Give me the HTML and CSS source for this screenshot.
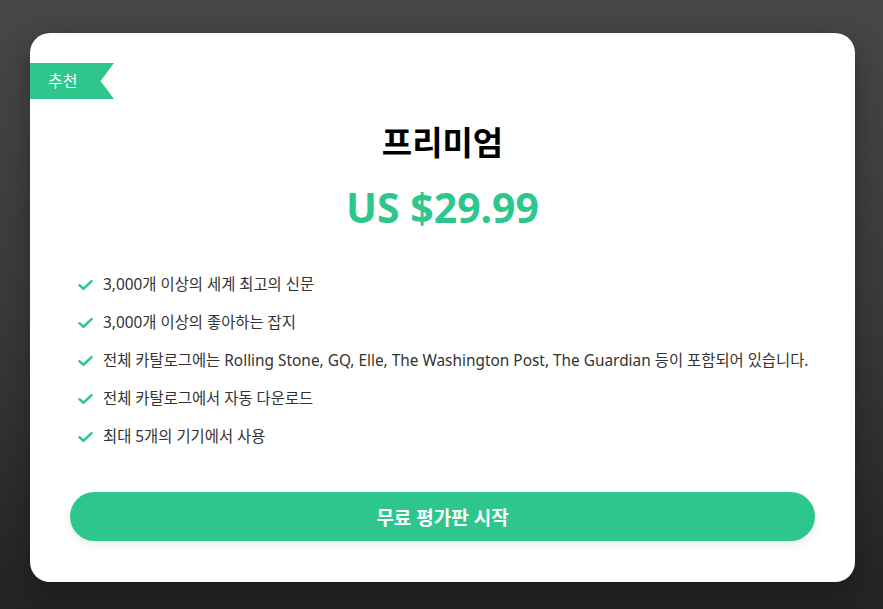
FILE: index.html
```html
<!DOCTYPE html>
<html lang="ko">
<head>
    <meta charset="UTF-8">
    <meta name="viewport" content="width=device-width, initial-scale=1.0">
    <title>프리미엄</title>
    <link rel="stylesheet" href="styles.css">
</head>
<body>
    <div class="plan-card">
        <div class="ribbon">추천</div>

        <h1 class="plan-title">프리미엄</h1>
        <p class="plan-price">US $29.99</p>

        <ul class="feature-list">
            <li>
                <svg class="check" viewBox="0 0 16 12"><path d="M1.5 6.2 L5.8 10 L14.5 1.8"/></svg>
                3,000개 이상의 세계 최고의 신문
            </li>
            <li>
                <svg class="check" viewBox="0 0 16 12"><path d="M1.5 6.2 L5.8 10 L14.5 1.8"/></svg>
                3,000개 이상의 좋아하는 잡지
            </li>
            <li>
                <svg class="check" viewBox="0 0 16 12"><path d="M1.5 6.2 L5.8 10 L14.5 1.8"/></svg>
                전체 카탈로그에는 Rolling Stone, GQ, Elle, The Washington Post, The Guardian 등이 포함되어 있습니다.
            </li>
            <li>
                <svg class="check" viewBox="0 0 16 12"><path d="M1.5 6.2 L5.8 10 L14.5 1.8"/></svg>
                전체 카탈로그에서 자동 다운로드
            </li>
            <li>
                <svg class="check" viewBox="0 0 16 12"><path d="M1.5 6.2 L5.8 10 L14.5 1.8"/></svg>
                최대 5개의 기기에서 사용
            </li>
        </ul>

        <button type="button" class="trial-button">무료 평가판 시작</button>
    </div>
</body>
</html>
```

FILE: styles.css
```css
* {
    margin: 0;
    padding: 0;
    box-sizing: border-box;
}

body {
    font-family: 'Noto Sans', 'Noto Sans CJK KR', sans-serif;
    background: linear-gradient(180deg, #474747 0%, #3a3a3a 50%, #232323 100%);
    min-height: 100vh;
    padding: 33px 0 0 30px;
    color: #333;
}

.plan-card {
    width: 825px;
    background: #fff;
    border-radius: 20px;
    padding: 30px 40px 41px;
    box-shadow: 0 10px 30px rgba(0, 0, 0, 0.3);
}

.ribbon {
    width: 84px;
    height: 36px;
    margin-left: -40px;
    padding-left: 18px;
    background: #2dc68d;
    color: #fff;
    font-size: 16px;
    line-height: 36px;
    clip-path: polygon(0 0, 100% 0, 84% 50%, 100% 100%, 0 100%);
}

.plan-title {
    margin-top: 24px;
    text-align: center;
    font-size: 33px;
    line-height: 40px;
    font-weight: bold;
    color: #000;
}

.plan-price {
    margin-top: 16px;
    text-align: center;
    font-size: 41px;
    line-height: 56px;
    font-weight: bold;
    color: #2dc68d;
}

.feature-list {
    list-style: none;
    margin-top: 38px;
    padding-left: 8px;
    display: flex;
    flex-direction: column;
    gap: 14px;
}

.feature-list li {
    display: flex;
    align-items: center;
    font-size: 15.4px;
    line-height: 24px;
    color: #333;
}

.check {
    width: 15px;
    height: 12px;
    margin-right: 10px;
    fill: none;
    stroke: #2dc68d;
    stroke-width: 2.6;
    stroke-linecap: round;
    stroke-linejoin: round;
}

.trial-button {
    display: block;
    width: 100%;
    height: 49px;
    margin-top: 43px;
    border: none;
    border-radius: 25px;
    background: #2dc68d;
    color: #fff;
    font-family: inherit;
    font-size: 19px;
    font-weight: bold;
    box-shadow: 0 4px 10px rgba(0, 0, 0, 0.08);
    cursor: pointer;
}
```
